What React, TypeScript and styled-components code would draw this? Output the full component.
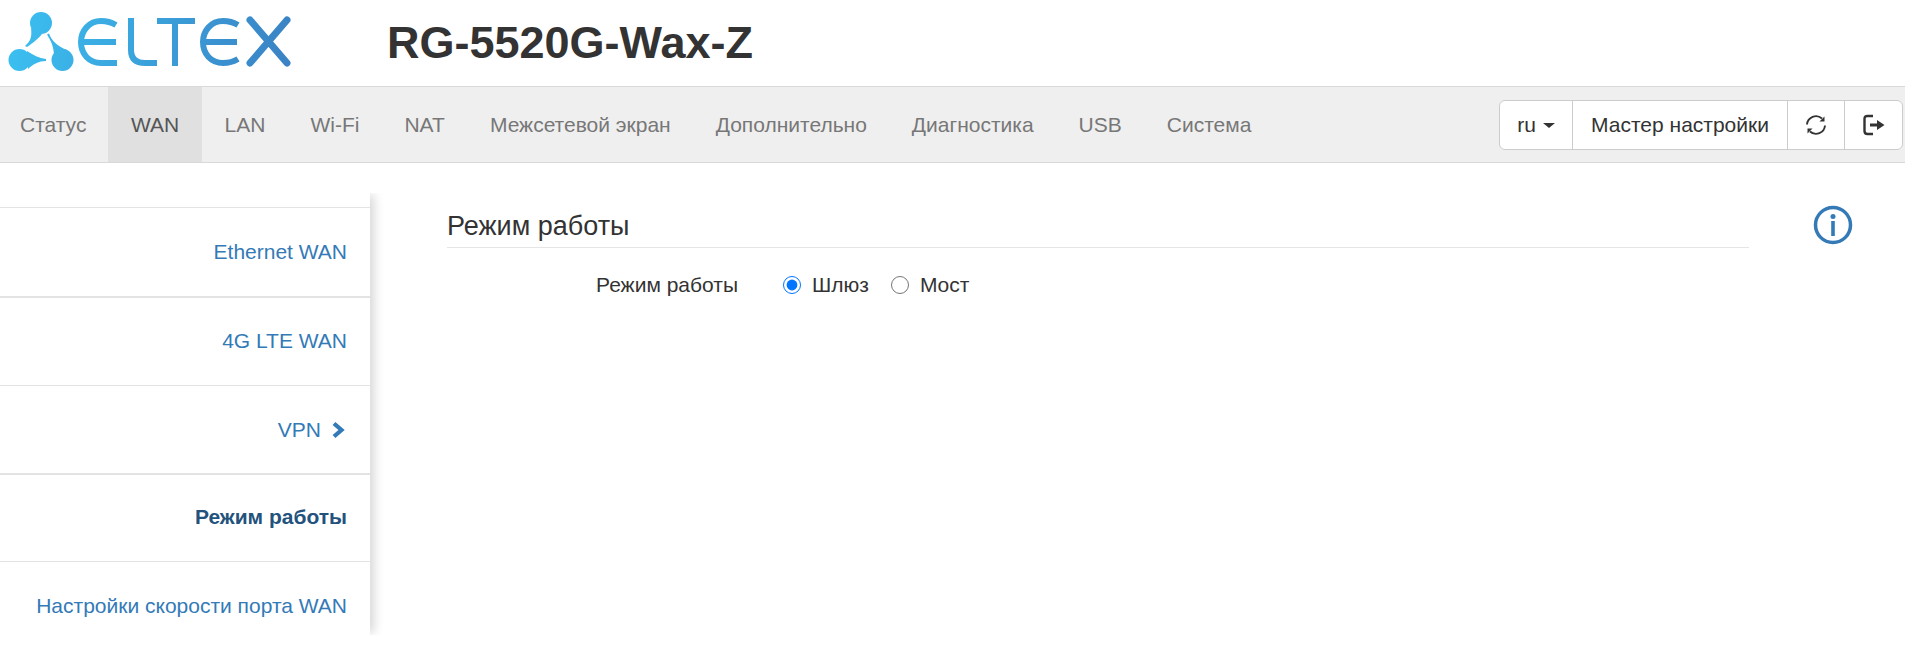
import React from "react";
import styled, { createGlobalStyle } from "styled-components";

const Global = createGlobalStyle`
  html, body { margin: 0; padding: 0; background: #fff; }
  body { font-family: "Liberation Sans", Arial, sans-serif; color: #333; width: 1905px; height: 650px; overflow: hidden; }
`;

const Page = styled.div`
  width: 1905px;
  height: 650px;
  display: flex;
  flex-direction: column;
`;

const Header = styled.header`
  height: 86px;
  display: flex;
  align-items: center;
`;

const LogoMark = styled.svg`
  width: 300px;
  height: 86px;
  flex: none;
  margin-right: 87px;
`;

const Title = styled.h1`
  margin: 0;
  font-size: 45px;
  font-weight: 700;
  color: #333;
  line-height: 84px;
`;

const NavBar = styled.nav`
  height: 75px;
  background: #efefef;
  border-top: 1px solid #d9d9d9;
  border-bottom: 1px solid #d9d9d9;
  display: flex;
  align-items: stretch;
  justify-content: space-between;
`;

const NavList = styled.div`
  display: flex;
  align-items: stretch;
`;

const NavItem = styled.a<{ $active?: boolean }>`
  display: flex;
  align-items: center;
  padding: 0 ${(p) => (p.$active ? "23px" : "22.5px")};
  font-size: 21px;
  color: ${(p) => (p.$active ? "#555" : "#777")};
  background: ${(p) => (p.$active ? "#e0e0e0" : "transparent")};
  &:first-child { padding-left: 20px; padding-right: 21.5px; }
`;

const ButtonGroup = styled.div`
  align-self: center;
  display: flex;
  height: 50px;
  margin-right: 2px;
  box-sizing: border-box;
  border: 1px solid #ccc;
  border-radius: 6px;
  background: #fff;
`;

const GroupButton = styled.button<{ $w: number }>`
  width: ${(p) => p.$w}px;
  box-sizing: border-box;
  border: 0;
  border-right: 1px solid #ccc;
  background: transparent;
  padding: 0;
  font: 21px "Liberation Sans", Arial, sans-serif;
  color: #333;
  display: flex;
  align-items: center;
  justify-content: center;
  gap: 7px;
  &:last-child { border-right: 0; }
`;

const Caret = styled.span`
  width: 0;
  height: 0;
  margin-top: 2px;
  border-top: 5px solid #333;
  border-left: 6px solid transparent;
  border-right: 6px solid transparent;
`;

const Main = styled.main`
  flex: 1;
  display: flex;
  align-items: flex-start;
  min-height: 0;
`;

const Sidebar = styled.aside`
  width: 370px;
  flex: none;
  margin-top: 30px;
  height: 442px;
  padding-top: 14px;
  box-sizing: border-box;
  background: #fff;
  box-shadow: 6px 0 10px -2px rgba(0, 0, 0, 0.16);
  clip-path: inset(0 -20px 0 0);
  overflow: hidden;
`;

const SideItem = styled.a<{ $current?: boolean; $thick?: boolean; $h?: number; $pushed?: boolean }>`
  display: flex;
  align-items: center;
  justify-content: flex-end;
  gap: 10px;
  box-sizing: border-box;
  height: ${(p) => p.$h ?? 89}px;
  padding-right: 23px;
  padding-top: ${(p) => (p.$pushed ? "15px" : "0")};
  padding-bottom: ${(p) => (p.$thick ? "2px" : "0")};
  border-top: ${(p) => (p.$thick ? "2px" : "1px")} solid #e3e3e3;
  font-size: 21px;
  font-weight: ${(p) => (p.$current ? 700 : 400)};
  color: ${(p) => (p.$current ? "#23527c" : "#337ab7")};
`;

const Chevron = styled.svg`
  width: 16px;
  height: 18px;
  flex: none;
`;

const Content = styled.section`
  flex: 1;
  display: flex;
  align-items: flex-start;
  padding: 46px 0 0 77px;
`;

const Panel = styled.div`
  width: 1302px;
  flex: none;
`;

const SectionTitle = styled.h2`
  margin: 0;
  font-size: 27px;
  font-weight: 400;
  line-height: 34px;
  color: #333;
  padding-bottom: 4px;
  border-bottom: 1px solid #e5e5e5;
`;

const FormRow = styled.div`
  display: flex;
  align-items: center;
  margin-top: 23px;
  height: 28px;
  font-size: 21px;
`;

const FieldLabel = styled.label`
  width: 291px;
  text-align: right;
  margin-right: 45px;
  flex: none;
`;

const RadioOption = styled.label`
  display: flex;
  align-items: center;
  margin-right: 22px;
`;

const RadioInput = styled.input`
  width: 18px;
  height: 18px;
  margin: 0 11px 0 0;
`;

const InfoIcon = styled.svg`
  width: 40px;
  height: 40px;
  flex: none;
  margin: -4px 0 0 64px;
`;

const tabs = ["Статус", "WAN", "LAN", "Wi-Fi", "NAT", "Межсетевой экран", "Дополнительно", "Диагностика", "USB", "Система"];

export default function App() {
  return (
    <Page>
      <Global />
      <Header>
        <LogoMark viewBox="0 0 300 86" role="img" aria-label="ELTEX">
          <defs>
            <linearGradient id="lg" x1="0" y1="0" x2="300" y2="60" gradientUnits="userSpaceOnUse">
              <stop offset="0" stopColor="#3bc3f3" />
              <stop offset="1" stopColor="#3a80c3" />
            </linearGradient>
          </defs>
          <g fill="url(#lg)">
            <circle cx="41" cy="23" r="11" />
            <circle cx="19.500" cy="60" r="11" />
            <circle cx="62.500" cy="60" r="11" />
            <path d="M31 28C32 36 31 41 25 46L27 47C33 43 39 38 42 34Z" />
            <path d="M27 51C33 55 39 58 46 59V61C39 61 33 64 28 69Z" />
            <path d="M47 34.500L49 33.500C52 41 57 46 67 50L54 56C54 47 51 41 47 34.500Z" />
          </g>
          <g fill="none" stroke="url(#lg)" strokeWidth="6">
            <path d="M116 25C111 22 106 21 101 21C89 21 81 31 81 42C81 54 89 63 101 63H117M81 42H116" />
            <path d="M131 18V50C131 59 136 63 145 63H157" />
            <path d="M157 21H195M175 21V66" />
            <path d="M238 25C233 22 228 21 223 21C211 21 203 31 203 42C203 54 211 63 223 63C228 63 233 62 238 59M203 42H237" />
          </g>
          <path d="M250 20L287 63M287 20L250 63" fill="none" stroke="url(#lg)" strokeWidth="7" strokeLinecap="round" />
        </LogoMark>
        <Title>RG-5520G-Wax-Z</Title>
      </Header>
      <NavBar>
        <NavList>
          {tabs.map((t) => (
            <NavItem key={t} $active={t === "WAN"}>{t}</NavItem>
          ))}
        </NavList>
        <ButtonGroup>
          <GroupButton $w={73}>ru<Caret /></GroupButton>
          <GroupButton $w={215}>Мастер настройки</GroupButton>
          <GroupButton $w={57}>
            <svg width="24" height="24" viewBox="0 0 24 24" fill="none" stroke="#333" strokeWidth="1.900">
              <path d="M3 11.500A9 9 0 0 1 18 5.500" />
              <path d="M21 12.500A9 9 0 0 1 6 18.500" />
              <path d="M20.500 3.500V8.500H15.500Z" fill="#333" stroke="none" />
              <path d="M3.500 20.500V15.500H8.500Z" fill="#333" stroke="none" />
            </svg>
          </GroupButton>
          <GroupButton $w={57}>
            <svg width="24" height="22" viewBox="0 0 24 22" fill="none">
              <path d="M11 2H5.500C3.500 2 2.500 3 2.500 5V17C2.500 19 3.500 20 5.500 20H11" stroke="#333" strokeWidth="2.400" />
              <path d="M8 9.500H15V6L22.500 11L15 16V12.500H8Z" fill="#333" />
            </svg>
          </GroupButton>
        </ButtonGroup>
      </NavBar>
      <Main>
        <Sidebar>
          <SideItem>Ethernet WAN</SideItem>
          <SideItem $thick>4G LTE WAN</SideItem>
          <SideItem $h={88}>
            VPN
            <Chevron viewBox="0 0 16 18"><path d="M3 2.500L10.500 9L3 15.500" fill="none" stroke="#337ab7" strokeWidth="4.200" /></Chevron>
          </SideItem>
          <SideItem $h={88} $thick $current>Режим работы</SideItem>
          <SideItem $h={74} $pushed>Настройки скорости порта WAN</SideItem>
        </Sidebar>
        <Content>
          <Panel>
            <SectionTitle>Режим работы</SectionTitle>
            <FormRow>
              <FieldLabel>Режим работы</FieldLabel>
              <RadioOption><RadioInput type="radio" name="mode" defaultChecked />Шлюз</RadioOption>
              <RadioOption><RadioInput type="radio" name="mode" />Мост</RadioOption>
            </FormRow>
          </Panel>
          <InfoIcon viewBox="0 0 40 40">
            <circle cx="20" cy="20" r="17.500" fill="none" stroke="#337ab7" strokeWidth="3.500" />
            <circle cx="20" cy="11.500" r="2.500" fill="#337ab7" />
            <rect x="18.200" y="16" width="3.600" height="15" fill="#337ab7" />
          </InfoIcon>
        </Content>
      </Main>
    </Page>
  );
}
